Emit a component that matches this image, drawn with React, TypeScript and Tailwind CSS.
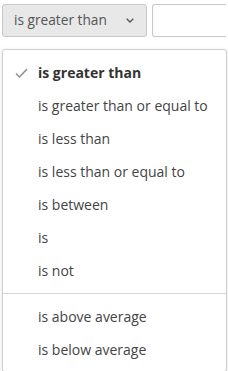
const options = [
  "is greater than",
  "is greater than or equal to",
  "is less than",
  "is less than or equal to",
  "is between",
  "is",
  "is not",
];

const extra = ["is above average", "is below average"];

function Item({ label, selected }: { label: string; selected?: boolean }) {
  return (
    <div className="flex h-[33px] items-center">
      <span className="flex w-[35px] justify-start pl-[12px]">
        {selected && (
          <svg width="13" height="10" viewBox="0 0 13 10" fill="none">
            <path d="M1 5.5 L4.5 9 L12 1" stroke="#8a8a8a" strokeWidth="1.3" />
          </svg>
        )}
      </span>
      <span className={selected ? "font-bold text-[#333]" : "text-[#444]"}>{label}</span>
    </div>
  );
}

export default function App() {
  return (
    <div
      className="h-[371px] w-[228px] overflow-hidden bg-white text-[14px]"
      style={{ fontFamily: '"Open Sans", sans-serif' }}
    >
      <div className="flex gap-[5px] px-[2px] pt-[4px]">
        <button className="flex h-[33px] w-[145px] shrink-0 items-center justify-between rounded-[3px] border border-[#c8c8c8] bg-[#e8e8e8] pl-[11px] pr-[12px] text-[13.7px] text-[#555]">
          <span>is greater than</span>
          <svg width="8" height="5" viewBox="0 0 8 5" fill="none">
            <path d="M0.7 0.7 L4 4 L7.3 0.7" stroke="#555" strokeWidth="1.3" />
          </svg>
        </button>
        <div className="h-[33px] flex-1 rounded-l-[3px] border border-r-0 border-[#c8c8c8] bg-white" />
      </div>
      <div className="ml-[2px] mt-[12px] w-[225px] rounded-[3px] border border-[#cfcfcf] bg-white pb-[5px] pt-[6px] shadow-[0_1px_4px_rgba(0,0,0,0.12)]">
        {options.map((o, i) => (
          <Item key={o} label={o} selected={i === 0} />
        ))}
        <div className="my-[6px] border-t border-[#d6d6d6]" />
        {extra.map((o) => (
          <Item key={o} label={o} />
        ))}
      </div>
    </div>
  );
}
